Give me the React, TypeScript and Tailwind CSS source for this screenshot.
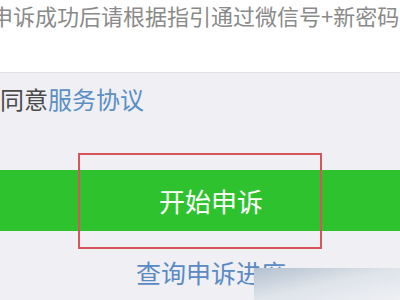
export default function App() {
  const font = { fontFamily: '"Noto Sans CJK SC", "Noto Sans", sans-serif' }
  return (
    <div
      className="relative w-[400px] h-[300px] overflow-hidden bg-[#efeff4]"
      style={font}
    >
      {/* hint text */}
      <div className="h-[73px] bg-white border-b border-[#e2e2e6] overflow-hidden">
        <p className="ml-[-9px] mt-[-1px] whitespace-nowrap text-[22px] leading-[32px] text-[#8a8a8a]">
          申诉成功后请根据指引通过微信号+新密码
        </p>
      </div>

      <div className="pt-[10px] leading-[32px] text-[24px] text-[#4a4a4a]">
        同意<span className="text-[#5a8fc6]">服务协议</span>
      </div>

      <div className="mt-[55px] h-[61px] bg-[#2ec32e] flex items-center justify-center">
        <span className="ml-[22px] text-[26px] text-white">开始申诉</span>
      </div>

      <div className="mt-[26px] pl-[136px] text-[25px] leading-[30px] text-[#5a8ac4]">
        查询申诉进度
      </div>

      {/* highlight box */}
      <div className="absolute left-[78px] top-[153px] w-[244px] h-[96px] border-2 border-[#d9545a]" />

      {/* watermark */}
      <div className="absolute left-[254px] top-[268px] w-[146px] h-[32px] bg-gradient-to-br from-[#b3c1d0] via-[#dfe4ea] to-[#eff0f4]" />
    </div>
  )
}
